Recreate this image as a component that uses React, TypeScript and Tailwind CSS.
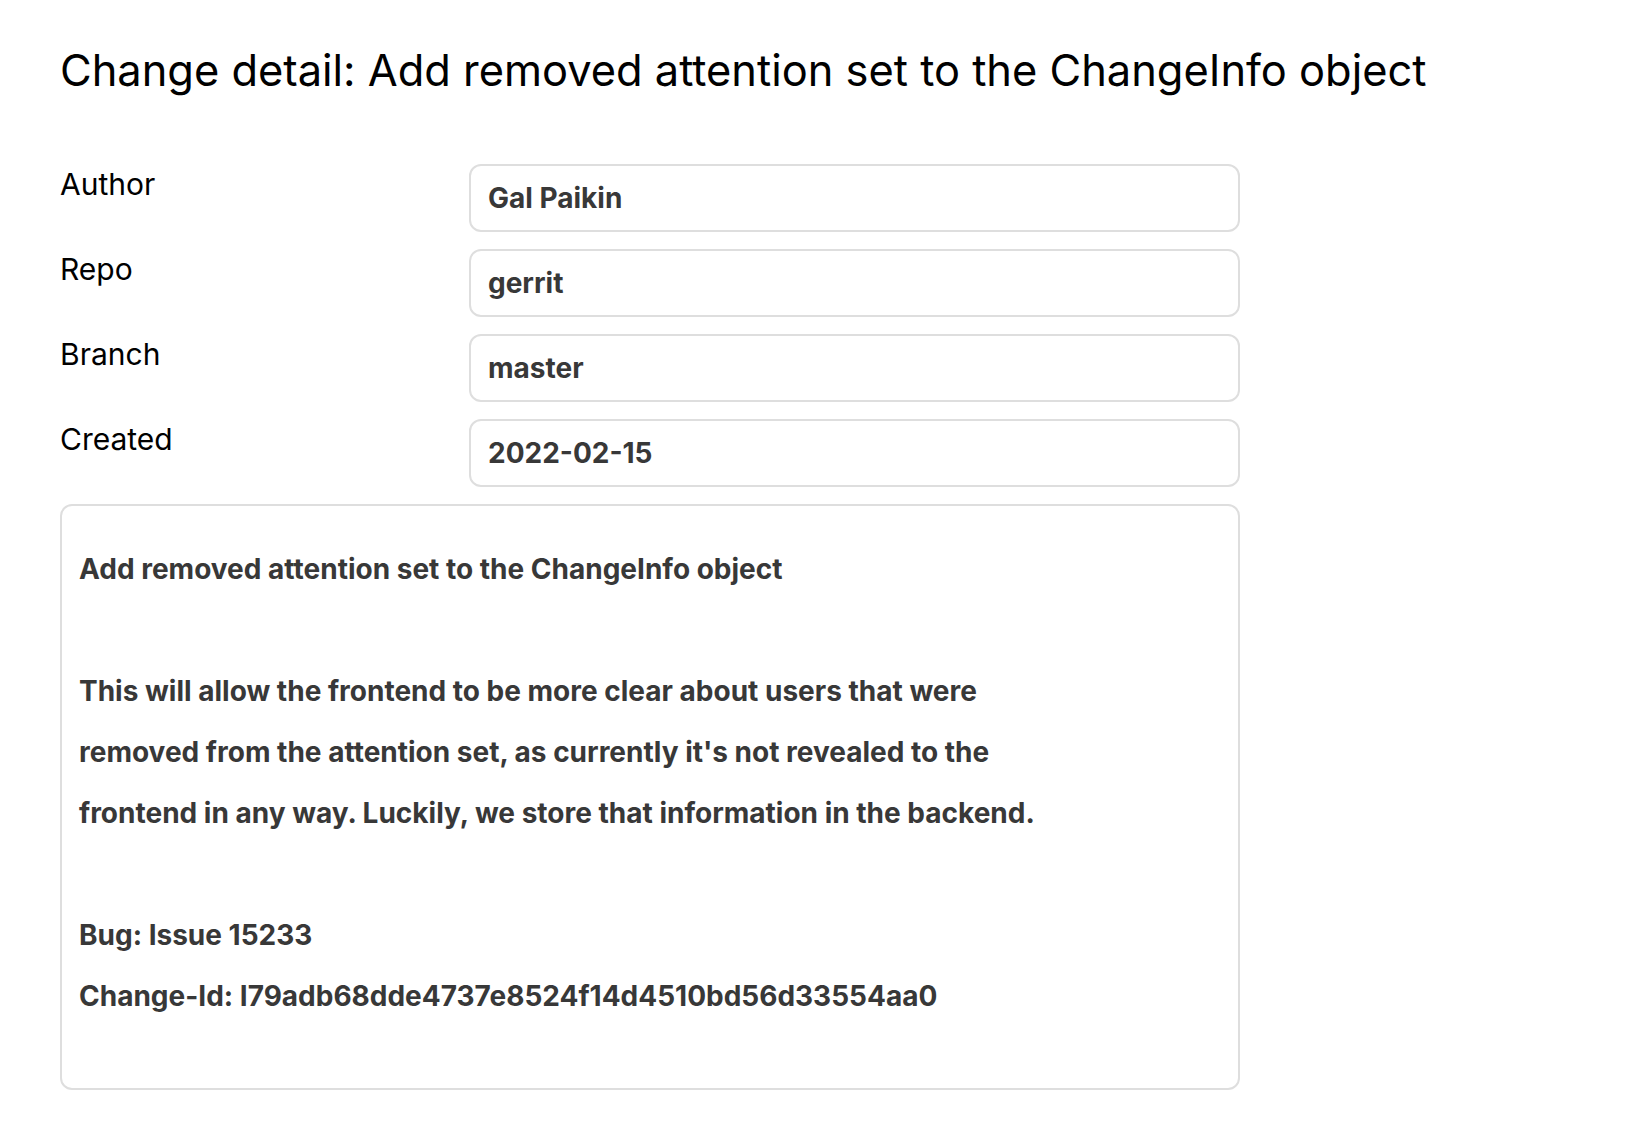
import React from 'react';

interface Field {
  label: string;
  value: string;
}

const fields: Field[] = [
  { label: 'Author', value: 'Gal Paikin' },
  { label: 'Repo', value: 'gerrit' },
  { label: 'Branch', value: 'master' },
  { label: 'Created', value: '2022-02-15' },
];

const message = `Add removed attention set to the ChangeInfo object

This will allow the frontend to be more clear about users that were
removed from the attention set, as currently it's not revealed to the
frontend in any way. Luckily, we store that information in the backend.

Bug: Issue 15233
Change-Id: I79adb68dde4737e8524f14d4510bd56d33554aa0`;

const App = () => {
  return (
    <div className="min-h-screen bg-white font-['Inter',sans-serif] text-black">
      <div className="w-[1180px] ml-[60px] pt-[40px]">
        <h1 className="text-[43.4px] leading-[60px] font-normal whitespace-nowrap">
          Change detail: Add removed attention set to the ChangeInfo object
        </h1>

        <div className="mt-[64px] grid grid-cols-[393px_1fr] gap-x-4 gap-y-[17px]">
          {fields.map((f) => (
            <React.Fragment key={f.label}>
              <div className="text-[30px] leading-[40px]">{f.label}</div>
              <div className="h-[68px] flex items-center px-[17px] border-2 border-[#dedede] rounded-[12px] text-[28px] font-bold text-[#383838]">
                {f.value}
              </div>
            </React.Fragment>
          ))}
        </div>

        <div className="mt-[17px] border-2 border-[#dedede] rounded-[12px] px-[17px] pt-[33px] pb-[61px] whitespace-pre text-[28px] leading-[61px] font-bold text-[#383838]">
          {message}
        </div>
      </div>
    </div>
  );
};

export default App;
